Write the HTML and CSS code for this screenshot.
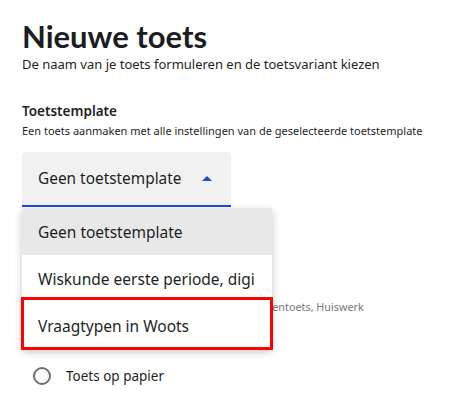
FILE: index.html
```html
<!DOCTYPE html>
<html lang="nl">
<head>
  <meta charset="UTF-8" />
  <title>Nieuwe toets</title>
  <link rel="stylesheet" href="styles.css">
</head>
<body>
  <main class="page">
    <h1 class="title">Nieuwe toets</h1>
    <p class="subtitle">De naam van je toets formuleren en de toetsvariant kiezen</p>

    <!-- Template -->
    <section class="field">
      <h2 class="field-label">Toetstemplate</h2>
      <p class="field-hint">Een toets aanmaken met alle instellingen van de geselecteerde toetstemplate</p>
      <div class="select-wrap">
        <div class="select">
          <span>Geen toetstemplate</span>
          <svg class="select-arrow" width="10" height="5" viewBox="0 0 10 5"><path d="M0 5 L5 0 L10 5 Z" fill="#1f48e0"/></svg>
        </div>
        <ul class="menu">
          <li class="menu-item selected">Geen toetstemplate</li>
          <li class="menu-item">Wiskunde eerste periode, digi</li>
          <li class="menu-item">Vraagtypen in Woots</li>
        </ul>
        <div class="highlight"></div>
      </div>
    </section>

    <!-- Variant -->
    <section class="field variant">
      <h2 class="field-label">Toetsvariant</h2>
      <label class="radio-option">
        <span class="radio"></span>
        <span class="radio-text">
          <span class="radio-title">Digitale toets</span>
          <span class="radio-desc">Summatieve toets, Formatieve toets, Oefentoets, Huiswerk</span>
        </span>
      </label>
      <label class="radio-option paper">
        <span class="radio"></span>
        <span class="radio-text">
          <span class="radio-title">Toets op papier</span>
        </span>
      </label>
    </section>
  </main>
</body>
</html>
```

FILE: styles.css
```css
* { box-sizing: border-box; }
body {
  margin: 0;
  min-height: 100vh;
  font-family: 'Noto Sans', 'Open Sans', sans-serif;
  color: #1e1f24;
  background: #fff;
}
.page {
  padding: 18px 22px 0;
}
.title {
  margin: 0;
  font-family: 'Lato', sans-serif;
  font-size: 31px;
  line-height: 36px;
  font-weight: 700;
  color: #1c1d22;
}
.subtitle {
  margin: 1px 0 0;
  font-size: 13px;
  line-height: 18px;
}
.field {
  margin-top: 29px;
}
.field-label {
  margin: 0;
  font-size: 13.5px;
  line-height: 18px;
  font-weight: 600;
}
.field-hint {
  margin: 3px 0 0;
  font-size: 11px;
  line-height: 16px;
}
.select-wrap {
  position: relative;
  margin-top: 13px;
}
.select {
  width: 209px;
  height: 55px;
  padding: 0 19px 0 16px;
  display: flex;
  align-items: center;
  justify-content: space-between;
  background: #f1f1f1;
  border-radius: 4px 4px 0 0;
  border-bottom: 2px solid #1f48e0;
  font-size: 15.4px;
}
.menu {
  position: absolute;
  top: 56px;
  left: 0;
  width: 250px;
  margin: 0;
  padding: 0;
  list-style: none;
  background: #fff;
  box-shadow: 0 3px 8px rgba(0,0,0,0.22);
  z-index: 2;
}
.menu-item {
  height: 47px;
  padding-left: 16px;
  display: flex;
  align-items: center;
  font-size: 15.5px;
  white-space: nowrap;
  overflow: hidden;
}
.menu-item.selected {
  background: #e8e8e8;
}
.highlight {
  position: absolute;
  top: 145px;
  left: -1px;
  width: 252px;
  height: 53px;
  border: 3px solid #ff0000;
  z-index: 3;
}
.variant {
  margin-top: 34px;
}
.radio-option {
  display: flex;
  align-items: flex-start;
  gap: 15px;
  margin: 22px 0 0 11px;
}
.radio-option.paper {
  margin-top: 52px;
}
.radio {
  width: 18px;
  height: 18px;
  border: 2px solid #6f6f6f;
  border-radius: 50%;
  flex: none;
}
.radio-text {
  display: flex;
  flex-direction: column;
}
.radio-title {
  font-size: 13.5px;
  line-height: 18px;
}
.radio-desc {
  font-size: 10.8px;
  line-height: 16px;
  color: #777;
}
```
